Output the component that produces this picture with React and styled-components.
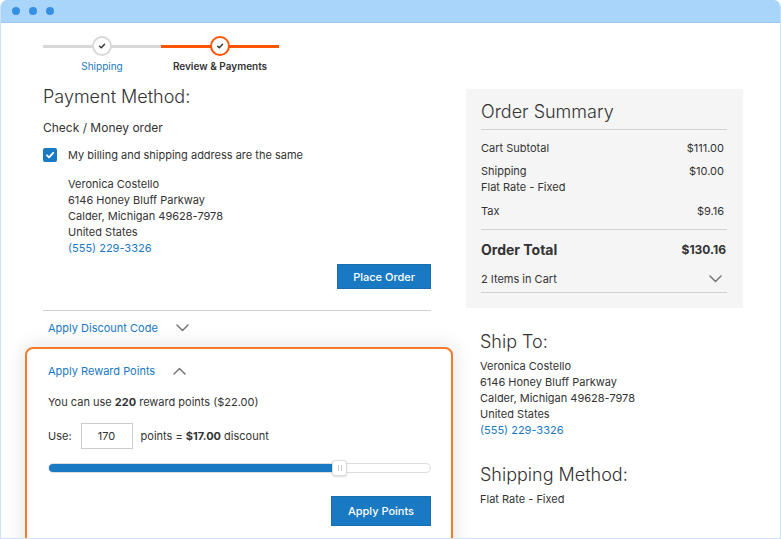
import React from "react";
import styled, { createGlobalStyle } from "styled-components";

const Global = createGlobalStyle`
  html, body { margin: 0; padding: 0; background: #fff; overflow: hidden; }
  body { font-family: Inter, "Noto Sans", sans-serif; color: #333; }
  * { box-sizing: border-box; }
`;

const Window = styled.div`
  width: 781px;
  height: 539px;
  border: 1px solid #cde2f8;
  border-top: none;
  border-radius: 7px 7px 0 0;
  overflow: hidden;
  display: flex;
  flex-direction: column;
`;

const TitleBar = styled.div`
  height: 23px;
  flex: none;
  background: #aad5fb;
  border-bottom: 1px solid #9cc9f3;
  display: flex;
  align-items: center;
  gap: 9px;
  padding-left: 11px;
`;

const Dot = styled.span`
  width: 8px;
  height: 8px;
  border-radius: 50%;
  background: #3590e4;
`;

const Main = styled.div`
  display: flex;
  align-items: flex-start;
  gap: 35px;
  padding: 13px 0 0 42px;
`;

const LeftCol = styled.div`
  width: 388px;
  display: flex;
  flex-direction: column;
`;

const RightCol = styled.div`
  width: 277px;
  margin-top: 53px;
  display: flex;
  flex-direction: column;
`;

const Progress = styled.div`
  display: flex;
`;

const Step = styled.div`
  position: relative;
  width: 118px;
  display: flex;
  flex-direction: column;
  align-items: center;
  &::before {
    content: "";
    position: absolute;
    left: 0;
    right: 0;
    top: 9px;
    height: 3px;
    background: ${(p) => (p.$active ? "#ff5501" : "#d8d8d8")};
  }
`;

const Circle = styled.span`
  position: relative;
  z-index: 1;
  width: 20px;
  height: 20px;
  border-radius: 50%;
  background: #fff;
  border: 2px solid ${(p) => (p.$active ? "#ff5501" : "#d8d8d8")};
  display: flex;
  align-items: center;
  justify-content: center;
`;

const StepLabel = styled.span`
  margin-top: 3px;
  font-size: 10px;
  line-height: 14px;
  color: ${(p) => (p.$active ? "#333" : "#1979c3")};
  font-weight: ${(p) => (p.$active ? 600 : 400)};
  white-space: nowrap;
`;

const Heading = styled.h2`
  margin: ${(p) => p.$mt || 0}px 0 0;
  font-size: 18px;
  line-height: 24px;
  font-weight: 300;
  color: #333;
`;

const MethodName = styled.div`
  margin-top: 10px;
  font-size: 12px;
  line-height: 18px;
`;

const CheckRow = styled.label`
  margin-top: 11px;
  display: flex;
  align-items: center;
  gap: 11px;
  font-size: 11px;
  line-height: 14px;
`;

const CheckBox = styled.span`
  width: 14px;
  height: 14px;
  border-radius: 2px;
  background: #1979c3;
  display: flex;
  align-items: center;
  justify-content: center;
`;

const Address = styled.div`
  margin: ${(p) => p.$mt}px 0 0 ${(p) => p.$ml || 0}px;
  font-size: 11px;
  line-height: 16px;
  color: #333;
`;

const Link = styled.a`
  color: #1979c3;
  text-decoration: none;
`;

const ButtonRow = styled.div`
  margin-top: ${(p) => p.$mt}px;
  display: flex;
  justify-content: flex-end;
`;

const Button = styled.button`
  height: ${(p) => p.$h}px;
  padding: 0 ${(p) => p.$px}px;
  background: #1979c3;
  border: 1px solid #1a6eb0;
  color: #fff;
  font-family: inherit;
  font-size: 11px;
  font-weight: 500;
`;

const Divider = styled.hr`
  margin: ${(p) => p.$mt}px 0 0;
  border: none;
  border-top: 1px solid #d1d1d1;
  width: 100%;
`;

const AccTitle = styled.div`
  margin-top: ${(p) => p.$mt}px;
  padding-left: ${(p) => (p.$flush ? 0 : 5)}px;
  display: flex;
  align-items: center;
  gap: 18px;
  font-size: 11px;
  line-height: 16px;
  color: #1979c3;
`;

const RewardBox = styled.div`
  margin: 11px -22px 0 -18px;
  padding: 14px 20px 30px 21px;
  border: 2px solid #f67a2a;
  border-radius: 8px;
  background: #fff;
  box-shadow: 0 0 22px rgba(0, 0, 0, 0.13);
  display: flex;
  flex-direction: column;
`;

const Body = styled.div`
  margin-top: ${(p) => p.$mt}px;
  font-size: 11px;
  line-height: 16px;
  b { font-weight: 700; }
`;

const UseRow = styled.div`
  margin-top: 13px;
  display: flex;
  align-items: center;
  font-size: 11px;
  b { font-weight: 700; }
`;

const NumInput = styled.div`
  margin: 0 8px 0 9px;
  width: 52px;
  height: 26px;
  border: 1px solid #ccc;
  display: flex;
  align-items: center;
  justify-content: center;
  font-size: 11px;
`;

const Track = styled.div`
  margin-top: 11px;
  height: 16px;
  display: flex;
  align-items: center;
  position: relative;
`;

const Rail = styled.div`
  width: 100%;
  height: 10px;
  border: 1px solid #ddd;
  border-radius: 5px;
  background: #fff;
  overflow: hidden;
`;

const Fill = styled.div`
  height: 100%;
  background: #1979c3;
`;

const Thumb = styled.span`
  position: absolute;
  top: 0;
  width: 15px;
  height: 16px;
  background: #fff;
  border: 1px solid #ddd;
  border-radius: 3px;
  box-shadow: 0 1px 2px rgba(0, 0, 0, 0.15);
  display: flex;
  align-items: center;
  justify-content: center;
  gap: 2px;
  &::before, &::after {
    content: "";
    width: 1px;
    height: 6px;
    background: #ccc;
  }
`;

const Summary = styled.div`
  background: #f5f5f5;
  padding: 11px 16px 15px 15px;
  display: flex;
  flex-direction: column;
`;

const SumRow = styled.div`
  margin-top: ${(p) => p.$mt}px;
  display: flex;
  justify-content: space-between;
  align-items: ${(p) => (p.$center ? "center" : "flex-start")};
  font-size: ${(p) => (p.$big ? 14 : 11)}px;
  line-height: ${(p) => (p.$big ? 20 : 16)}px;
  font-weight: ${(p) => (p.$big ? 700 : 400)};
`;

const Value = styled.span`
  font-size: ${(p) => (p.$big ? 12 : 11)}px;
  padding-right: ${(p) => (p.$big ? 1 : 3)}px;
`;

const ChevronWrap = styled.span`
  display: flex;
  padding-right: 5px;
`;

const ShipSection = styled.div`
  padding-left: 14px;
  display: flex;
  flex-direction: column;
`;

const Check = ({ color = "#333", size = 8 }) => (
  <svg width={size} height={size} viewBox="0 0 10 10">
    <path d="M2 5.3 L4.1 7.3 L8.2 2.8" fill="none" stroke={color} strokeWidth="1.8" strokeLinecap="round" strokeLinejoin="round" />
  </svg>
);

const Chevron = ({ up }) => (
  <svg width="13" height="8" viewBox="0 0 13 8">
    <path d={up ? "M1 7 L6.5 1.5 L12 7" : "M1 1 L6.5 6.5 L12 1"} fill="none" stroke="#777" strokeWidth="1.5" strokeLinecap="round" strokeLinejoin="round" />
  </svg>
);

const AddressBlock = ({ mt, ml }) => (
  <Address $mt={mt} $ml={ml}>
    <div>Veronica Costello</div>
    <div>6146 Honey Bluff Parkway</div>
    <div>Calder, Michigan 49628-7978</div>
    <div>United States</div>
    <Link href="#">(555) 229-3326</Link>
  </Address>
);

const used = 170;
const available = 220;
const ratio = used / available;

export default function App() {
  return (
    <>
      <Global />
      <Window>
        <TitleBar>
          <Dot />
          <Dot />
          <Dot />
        </TitleBar>
        <Main>
          <LeftCol>
            <Progress>
              <Step>
                <Circle>
                  <Check />
                </Circle>
                <StepLabel>Shipping</StepLabel>
              </Step>
              <Step $active>
                <Circle $active>
                  <Check />
                </Circle>
                <StepLabel $active>Review &amp; Payments</StepLabel>
              </Step>
            </Progress>

            <Heading $mt={12}>Payment Method:</Heading>
            <MethodName>Check / Money order</MethodName>
            <CheckRow>
              <CheckBox>
                <Check color="#fff" size={10} />
              </CheckBox>
              My billing and shipping address are the same
            </CheckRow>
            <AddressBlock mt={14} ml={25} />
            <ButtonRow $mt={8}>
              <Button $h={25} $px={15}>Place Order</Button>
            </ButtonRow>
            <Divider $mt={21} />
            <AccTitle $mt={9}>
              Apply Discount Code <Chevron />
            </AccTitle>

            <RewardBox>
              <AccTitle $mt={0} $flush>
                Apply Reward Points <Chevron up />
              </AccTitle>
              <Body $mt={15}>
                You can use <b>{available}</b> reward points ($22.00)
              </Body>
              <UseRow>
                Use:
                <NumInput>{used}</NumInput>
                <span>
                  points = <b>$17.00</b> discount
                </span>
              </UseRow>
              <Track>
                <Rail>
                  <Fill style={{ width: `calc((100% - 15px) * ${ratio} + 2px)` }} />
                </Rail>
                <Thumb style={{ left: `calc((100% - 15px) * ${ratio})` }} />
              </Track>
              <ButtonRow $mt={20}>
                <Button $h={30} $px={16}>Apply Points</Button>
              </ButtonRow>
            </RewardBox>
          </LeftCol>

          <RightCol>
            <Summary>
              <Heading>Order Summary</Heading>
              <Divider $mt={5} />
              <SumRow $mt={10}>
                <span>Cart Subtotal</span>
                <Value>$111.00</Value>
              </SumRow>
              <SumRow $mt={7}>
                <span>
                  Shipping
                  <br />
                  Flat Rate - Fixed
                </span>
                <Value>$10.00</Value>
              </SumRow>
              <SumRow $mt={8}>
                <span>Tax</span>
                <Value>$9.16</Value>
              </SumRow>
              <Divider $mt={10} />
              <SumRow $mt={10} $big>
                <span>Order Total</span>
                <Value $big>$130.16</Value>
              </SumRow>
              <SumRow $mt={11} $center>
                <span>2 Items in Cart</span>
                <ChevronWrap>
                  <Chevron />
                </ChevronWrap>
              </SumRow>
              <Divider $mt={5} />
            </Summary>
            <ShipSection>
              <Heading $mt={22}>Ship To:</Heading>
              <AddressBlock mt={4} />
              <Heading $mt={25}>Shipping Method:</Heading>
              <Address $mt={4}>Flat Rate - Fixed</Address>
            </ShipSection>
          </RightCol>
        </Main>
      </Window>
    </>
  );
}
